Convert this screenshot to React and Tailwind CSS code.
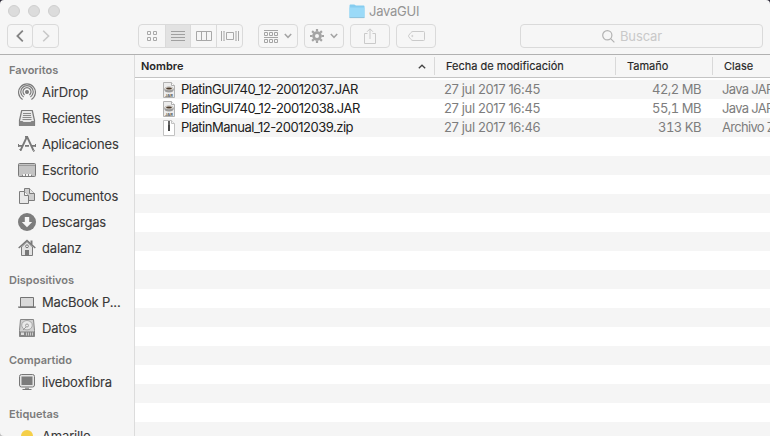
import React from 'react';

const btn = 'flex h-6 items-center justify-center rounded-[4px] border border-[#dadada] bg-[#f6f6f6]';

function Chevron({ className = '' }) {
  return (
    <svg className={className} width="8" height="6" viewBox="0 0 8 6" fill="none" stroke="#a4a4a4" strokeWidth="1.5">
      <path d="M.8 1 4 4.3 7.2 1" />
    </svg>
  );
}

function Folder() {
  return (
    <svg width="16" height="15" viewBox="0 0 16 15">
      <path d="M.5 2C.5.8 1 .5 1.8.5h3.4c.9 0 1 .9 1.8.9h7.6c.6 0 .9.3.9.9V13c0 .7-.3 1-.9 1H1.4c-.6 0-.9-.3-.9-1z" fill="#86cdf0" />
      <path d="M.5 3.6h15V13c0 .7-.3 1-.9 1H1.4c-.6 0-.9-.3-.9-1z" fill="#9bdaf8" />
      <path d="M.6 13.6h14.8" stroke="#8fbfd6" strokeWidth=".9" />
    </svg>
  );
}

function TitleBar() {
  return (
    <div className="relative flex h-6 items-start">
      <div className="ml-2 mt-[5px] flex w-[341px] gap-2">
        {[0, 1, 2].map((i) => (
          <span key={i} className="h-3 w-3 rounded-full border border-[#cfcfcf] bg-[#dcdcdc]" />
        ))}
      </div>
      <div className="mt-1 flex gap-1">
        <Folder />
        <span className="text-[13px] leading-[15px] tracking-[-0.25px] text-[#949494]">JavaGUI</span>
      </div>
      <svg className="absolute left-0 top-0" width="4" height="4"><path d="M0 0h4Q0 0 0 4z" fill="#2b2836" /></svg>
      <svg className="absolute right-0 top-0" width="4" height="4"><path d="M4 0H0Q4 0 4 4z" fill="#2b2836" /></svg>
    </div>
  );
}

function Toolbar() {
  return (
    <div className="flex h-[30px] items-start pl-[7px]">
      <div className="flex w-[131px]">
        <div className={btn + ' w-[26px]'}>
          <svg width="8" height="12" viewBox="0 0 8 12" fill="none" stroke="#848484" strokeWidth="1.8"><path d="M6.8.7 1.4 6l5.4 5.3" /></svg>
        </div>
        <div className={btn + ' -ml-px w-[27px]'}>
          <svg width="8" height="12" viewBox="0 0 8 12" fill="none" stroke="#c8c8c8" strokeWidth="1.6"><path d="M1.2.7 6.6 6l-5.4 5.3" /></svg>
        </div>
      </div>
      <div className="flex h-6 w-[105px] overflow-hidden rounded-[4px] border border-[#dadada]">
        <div className="flex w-[27px] items-center justify-center border-r border-[#dadada]">
          <svg className="-ml-px" width="10" height="10" viewBox="0 0 10 10" fill="none" stroke="#a8a8a8">
            <path d="M.5.5h3v3h-3zM6.5.5h3v3h-3zM.5 6.5h3v3h-3zM6.5 6.5h3v3h-3z" />
          </svg>
        </div>
        <div className="flex w-[25px] items-center justify-center border-r border-[#dadada] bg-[#e2e2e2]">
          <svg width="14" height="10" viewBox="0 0 14 10" stroke="#a0a0a0"><path d="M0 .5h14M0 3.5h14M0 6.5h14M0 9.5h14" /></svg>
        </div>
        <div className="flex w-[26px] items-center justify-center border-r border-[#dadada]">
          <svg width="16" height="10" viewBox="0 0 16 10" fill="none" stroke="#a8a8a8"><path d="M.5.5h15v9H.5zM5.5 0v10M10.5 0v10" /></svg>
        </div>
        <div className="flex flex-1 items-center justify-center">
          <svg width="18" height="10" viewBox="0 0 18 10" fill="none" stroke="#a8a8a8"><path d="M5.5 1.5h7v7h-7zM.5 0v10M17.5 0v10M2.5.5h1M3 .5v9M2.5 9.5h1M15.5.5h-1M15 .5v9M15.5 9.5h-1" /></svg>
        </div>
      </div>
      <div className={btn + ' ml-[15px] w-10 gap-[6px]'}>
        <svg width="14" height="13" viewBox="0 0 14 13" fill="none" stroke="#a4a4a4">
          <path d="M0 .5h14M0 7.5h14M.5 2.5h3v3h-3zM5.5 2.5h3v3h-3zM10.5 2.5h3v3h-3zM.5 9.5h3v3h-3zM5.5 9.5h3v3h-3zM10.5 9.5h3v3h-3z" />
        </svg>
        <Chevron />
      </div>
      <div className={btn + ' ml-[6px] w-10 gap-[6px]'}>
        <svg width="14" height="14" viewBox="-7 -7 14 14" fill="none" stroke="#a4a4a4">
          <circle r="3.4" strokeWidth="2.8" />
          <path d="M0-4.5V-7M0 4.500V7M-4.500 0H-7M4.500 0H7M-3.200-3.200-4.900-4.900M3.200 3.200 4.900 4.900M-3.200 3.200-4.900 4.900M3.200-3.200 4.900-4.900" strokeWidth="2.200" />
        </svg>
        <Chevron />
      </div>
      <div className={btn + ' ml-[6px] w-10'}>
        <svg width="12" height="16" viewBox="0 0 12 16" fill="none" stroke="#cacaca">
          <path d="M3.5 5.5h-3v10h11v-10h-3M6 11V1M3 3.8 6 .8l3 3" />
        </svg>
      </div>
      <div className={btn + ' ml-[6px] w-10'}>
        <svg width="17" height="10" viewBox="0 0 17 10" fill="none" stroke="#cacaca">
          <path d="M5 .5h10.5q1 0 1 1v7q0 1-1 1H5Q3.800 9.500 3 8.500L.8 5.800Q.2 5 .8 4.200L3 1.500Q3.800.5 5 .5z" /><circle cx="4.300" cy="5" r=".6" />
        </svg>
      </div>
      <div className={btn + ' ml-[84px] w-[243px] gap-[5px] pr-[19px]'}>
        <svg width="13" height="13" viewBox="0 0 13 13" fill="none" stroke="#b2b2b2" strokeWidth="1.200"><circle cx="5.300" cy="5.300" r="4.600" /><path d="m8.600 8.600 3.800 3.800" /></svg>
        <span className="text-[13px] leading-4 tracking-[-0.1px] text-[#c9c9c9]">Buscar</span>
      </div>
    </div>
  );
}

const icons = {
  airdrop: (
    <g fill="none" stroke="#7b7b7b" strokeWidth="1.200">
      <path d="M4.600 16.400A8.400 8.400 0 1 1 13.400 16.400M5.600 14A6.200 6.200 0 1 1 12.400 14M6.600 11.900A4 4 0 1 1 11.400 11.900" />
      <circle cx="9" cy="9" r="1.400" fill="#7b7b7b" />
    </g>
  ),
  recents: (
    <g>
      <path d="M3.700 1.500h10.600l2.200 10v5h-15v-5z" fill="#e9e9e9" stroke="#7b7b7b" strokeWidth="1.200" strokeLinejoin="round" />
      <path d="M5 4.500h8M5 6.500h8M4.500 8.500h9M4.500 10.500h9" stroke="#8b8b8b" />
      <path d="M1.500 12h3l1 1h7l1-1h3v5h-15z" fill="#858585" />
    </g>
  ),
  apps: (
    <g fill="none" stroke="#787878">
      <path d="M8.800 2 2.500 15.500M9.200 2l6.300 13.500" strokeWidth="1.800" />
      <path d="M7 1.800h3M0 10.800h4.500M7 10.800h4M13.500 10.800H18" strokeWidth="1.800" />
      <path d="M.5 9v3M17.500 9v3M1.500 14l1.500 2M15 16.500l2-1" />
    </g>
  ),
  desktop: (
    <g>
      <rect x=".5" y="2.500" width="17" height="13" rx="1" fill="#c4c4c4" stroke="#797979" />
      <path d="M1 4.500h16" stroke="#9a9a9a" />
      <path d="M4 13h10v2H4z" fill="#f5f5f5" /><path d="M4.500 15v-1.500M7.500 13v2M10.500 13v2M13.500 15v-1.500" fill="none" stroke="#858585" />
    </g>
  ),
  docs: (
    <g stroke="#7c7c7c" strokeLinejoin="round">
      <path d="M6.500 1.500h5l5 5v7h-10z" fill="#cecece" /><path d="M11.500 1.500v5h5" fill="#e5e5e5" />
      <path d="M1.500 4.500h5l4 4v8h-9z" fill="#e8e8e8" /><path d="M6.500 4.500v4h4" fill="#f5f5f5" />
    </g>
  ),
  downloads: (
    <g><circle cx="9" cy="9" r="9" fill="#7d7d7d" /><path d="M6.800 4h4.400v5h3L9 14.200 3.800 9h3z" fill="#f7f7f7" /></g>
  ),
  home: (
    <g>
      <path d="M3.500 8v8.500h11V8L9 2.500z" fill="#e2e2e2" stroke="#7b7b7b" />
      <path d="M12.500 1.500h2v4h-2z" fill="#7b7b7b" />
      <path d="M.7 9 9 1.500 17.300 9" fill="none" stroke="#777" strokeWidth="1.500" />
      <path d="M7 11h4v6H7z" fill="#777" /><circle cx="9" cy="7.300" r="1.400" fill="#f5f5f5" stroke="#777" />
    </g>
  ),
  laptop: (
    <g><path d="M2.500 4.500h13v9.500h-13z" fill="#d9d9d9" stroke="#737373" strokeLinejoin="round" /><path d="M0 13.500h18v.7q0 .8-1.500.8h-15Q0 15 0 14.200z" fill="#777" /></g>
  ),
  disk: (
    <g>
      <path d="M2.500.5h13l1 11v6h-15v-6z" fill="#d0d0d0" stroke="#858585" />
      <ellipse cx="9" cy="6.200" rx="5.300" ry="4.700" fill="#e9e9e9" stroke="#a8a8a8" />
      <circle cx="9" cy="6.500" r="1.500" fill="none" stroke="#9d9d9d" /><path d="m8 8-3 3" stroke="#999" />
      <path d="M1.500 12.500h15v5h-15z" fill="#858585" /><path d="M3 13.500h3v2.500H3z" fill="#ddd" />
      <path d="M8.500 13.500v3M10.500 13.500v3M12.500 13.500v3M14.500 13.500v3" stroke="#ccc" />
    </g>
  ),
  monitor: (
    <g>
      <rect x="1.500" y="1.500" width="15" height="12.500" rx="2" fill="#e4e4e4" stroke="#777" />
      <rect x="3.500" y="3.500" width="11" height="8.500" fill="#7c7c7c" />
      <path d="M7 14.500h4v1.500H7z" fill="#999" /><path d="M4.500 16.500h9" stroke="#777" />
    </g>
  ),
  yellow: <circle cx="9" cy="9" r="6" fill="#f5cf48" />,
};

function SideItem({ icon, children }) {
  return (
    <div className="flex h-[26px] shrink-0 items-center gap-[6px] pl-[18px]">
      <svg className="shrink-0" width="18" height="18" viewBox="0 0 18 18">{icons[icon]}</svg>
      <span className="whitespace-nowrap text-[13px] leading-4 tracking-[-0.16px] text-[#383838] [-webkit-text-stroke:0.1px]">{children}</span>
    </div>
  );
}

function SideHeading({ className = 'h-7', children }) {
  return (
    <div className={'flex shrink-0 items-end pb-[2px] pl-[9px] text-[11px] font-semibold leading-[14px] text-[#7b7b7b] ' + className}>{children}</div>
  );
}

function Sidebar() {
  return (
    <aside className="relative flex w-[135px] shrink-0 flex-col overflow-hidden border-r border-[#dcdcdc] bg-[#f5f5f5]">
      <SideHeading className="h-6">Favoritos</SideHeading>
      <SideItem icon="airdrop">AirDrop</SideItem>
      <SideItem icon="recents">Recientes</SideItem>
      <SideItem icon="apps">Aplicaciones</SideItem>
      <SideItem icon="desktop">Escritorio</SideItem>
      <SideItem icon="docs">Documentos</SideItem>
      <SideItem icon="downloads">Descargas</SideItem>
      <SideItem icon="home">dalanz</SideItem>
      <SideHeading>Dispositivos</SideHeading>
      <SideItem icon="laptop">MacBook P...</SideItem>
      <SideItem icon="disk">Datos</SideItem>
      <SideHeading>Compartido</SideHeading>
      <SideItem icon="monitor">liveboxfibra</SideItem>
      <SideHeading>Etiquetas</SideHeading>
      <SideItem icon="yellow">Amarillo</SideItem>
      <svg className="absolute bottom-0 left-0" width="4" height="4"><path d="M0 0Q0 4 4 4H0z" fill="#bdbdbd" /></svg>
    </aside>
  );
}

function JarIcon() {
  return (
    <svg width="12" height="16" viewBox="0 0 12 16">
      <path d="M.5.5h8l3 3v12H.5z" fill="#ededed" stroke="#b2b2b2" />
      <path d="M8.500.5v3h3" fill="#fff" stroke="#b0b0b0" />
      <ellipse cx="6" cy="7.500" rx="4.700" ry="2.900" fill="#9c9c9c" />
      <ellipse cx="6" cy="6.500" rx="4.200" ry="1.700" fill="#dcd8d2" /><ellipse cx="6" cy="6.500" rx="2.900" ry="1.100" fill="#4b3a2c" />
      <text x="6" y="14.500" textAnchor="middle" fontSize="4" fontWeight="700" fill="#555">JAR</text>
    </svg>
  );
}

function ZipIcon() {
  return (
    <svg width="12" height="16" viewBox="0 0 12 16">
      <path d="M.5.5h8l3 3v12H.5z" fill="#fff" stroke="#c2c2c2" />
      <path d="M8.500.5v3h3" fill="#f2f2f2" stroke="#c2c2c2" />
      <path d="M6 1v5" stroke="#666" strokeWidth="2" />
      <path d="M5 5h2v6H5z" fill="#484848" />
    </svg>
  );
}

const files = [
  { icon: <JarIcon />, name: 'PlatinGUI740_12-20012037.JAR', date: '27 jul 2017 16:45', size: '42,2 MB', kind: 'Java JAR' },
  { icon: <JarIcon />, name: 'PlatinGUI740_12-20012038.JAR', date: '27 jul 2017 16:45', size: '55,1 MB', kind: 'Java JAR' },
  { icon: <ZipIcon />, name: 'PlatinManual_12-20012039.zip', date: '27 jul 2017 16:46', size: '313 KB', kind: 'Archivo ZIP' },
];

function FileList() {
  return (
    <main className="flex min-w-0 flex-1 flex-col overflow-hidden bg-white">
      <div className="flex h-[23px] shrink-0 items-center border-b border-[#c4c4c4] bg-[#f6f6f6] text-[11px] leading-[14px] text-[#262626]">
        <div className="flex w-[299px] items-center justify-between pl-[6px] pr-2 font-semibold">
          <span>Nombre</span>
          <svg width="8" height="5" viewBox="0 0 8 5" fill="none" stroke="#444" strokeWidth="1.300"><path d="M.8 4.300 4 1.200l3.200 3.100" /></svg>
        </div>
        <div className="flex h-[18px] w-[181px] items-center border-l border-[#d9d9d9] pl-[11px] [-webkit-text-stroke:0.15px]">Fecha de modificación</div>
        <div className="flex h-[18px] w-[97px] items-center border-l border-[#d9d9d9] pl-[11px] [-webkit-text-stroke:0.15px]">Tamaño</div>
        <div className="flex h-[18px] flex-1 items-center border-l border-[#d9d9d9] pl-[11px] [-webkit-text-stroke:0.15px]">Clase</div>
      </div>
      <div className="mt-[2px] flex flex-col text-[13px] leading-[19px] text-[#7d7d7d]">
        {Array.from({ length: 19 }, (_, i) => {
          const f = files[i];
          return (
            <div key={i} className="flex h-[19px] shrink-0 items-center whitespace-nowrap odd:bg-[#f5f5f5]">
              {f && (
                <>
                  <div className="flex w-[309px] items-center gap-[6px] pl-7">
                    {f.icon}
                    <span className="tracking-[-0.48px] text-[#202020]">{f.name}</span>
                  </div>
                  <span className="w-[157px] tracking-[-0.38px]">{f.date}</span>
                  <span className="w-[100px] text-right tabular-nums tracking-[-0.5px]">{f.size}</span>
                  <span className="ml-[21px] w-12 overflow-hidden tracking-[-0.7px]">{f.kind}</span>
                </>
              )}
            </div>
          );
        })}
      </div>
    </main>
  );
}

export default function App() {
  return (
    <div className="flex h-[436px] w-[770px] flex-col overflow-hidden bg-[#f6f6f6] font-['Inter',sans-serif]">
      <header className="h-[55px] shrink-0 border-b border-[#b1b1b1]">
        <TitleBar />
        <Toolbar />
      </header>
      <div className="flex min-h-0 flex-1">
        <Sidebar />
        <FileList />
      </div>
    </div>
  );
}
